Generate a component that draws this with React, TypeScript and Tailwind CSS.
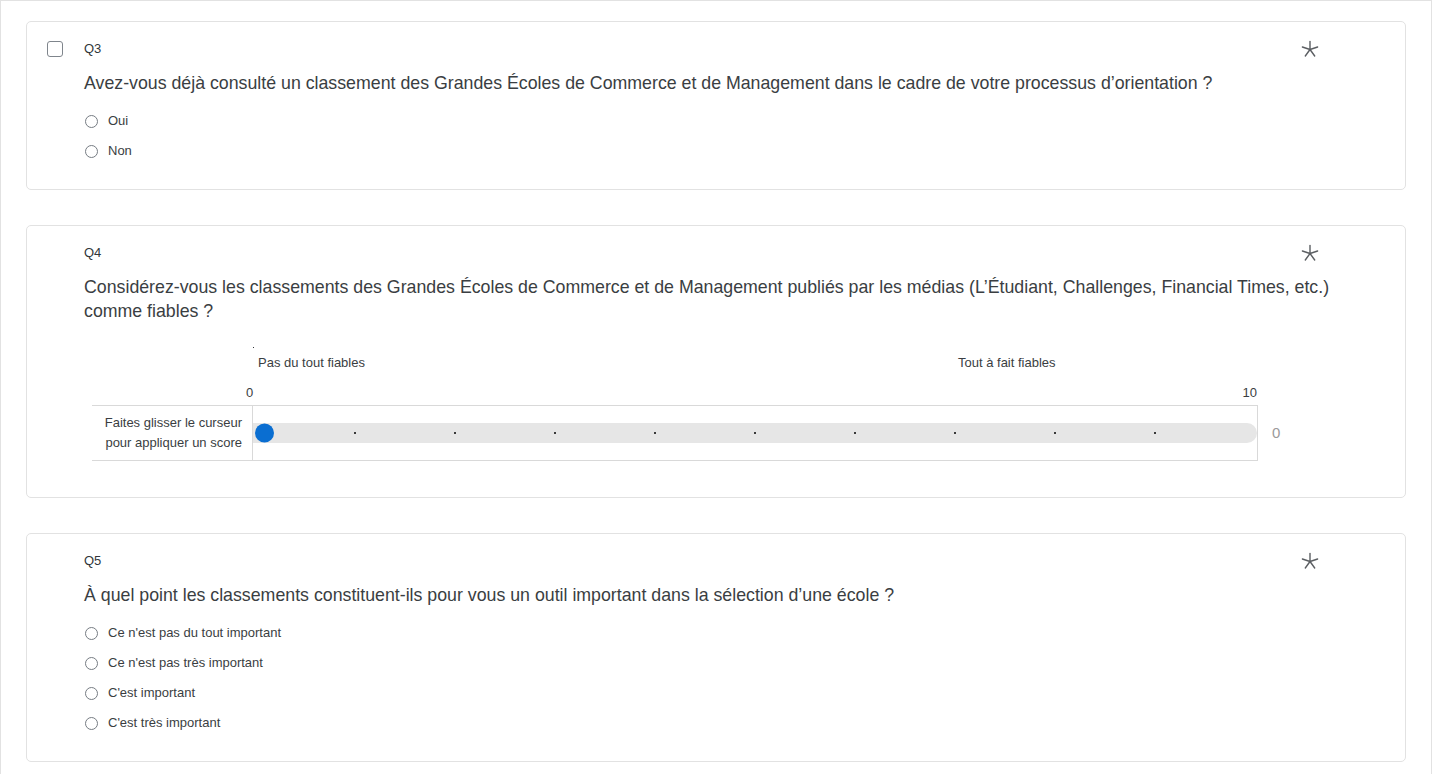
import React from 'react';

const font = { fontFamily: '"Liberation Sans", Arial, sans-serif' };

function Star() {
  const arms = [0, 72, 144, 216, 288];
  return (
    <svg width="18" height="18" viewBox="0 0 18 18" className="text-[#5b5e62]">
      {arms.map((a) => {
        const r = ((a - 90) * Math.PI) / 180;
        return (
          <line
            key={a}
            x1="9"
            y1="9.5"
            x2={9 + 8 * Math.cos(r)}
            y2={9.5 + 8 * Math.sin(r)}
            stroke="currentColor"
            strokeWidth="1.4"
            strokeLinecap="round"
          />
        );
      })}
    </svg>
  );
}

function Radio({ label }: { label: string }) {
  return (
    <div className="flex h-[30px] items-center">
      <span className="ml-[1px] h-[13px] w-[13px] rounded-full border border-[#767c83] bg-white" />
      <span className="ml-[10px] text-[13px] text-[#3a3e42]">{label}</span>
    </div>
  );
}

function Card({
  id,
  question,
  checkbox,
  children,
  bottom = 'pb-[23px]',
}: {
  id: string;
  question: string;
  checkbox?: boolean;
  children: React.ReactNode;
  bottom?: string;
}) {
  return (
    <div className={`flex rounded-[5px] border border-[#e2e2e2] bg-white ${bottom}`}>
      <div className="w-[57px] shrink-0 pl-[20px] pt-[19px]">
        {checkbox && <div className="h-[16px] w-[16px] rounded-[3px] border border-[#7f858c]" />}
      </div>
      <div className="flex-1 pr-[45px] pt-[17px]">
        <div className="flex h-[20px] items-center justify-between">
          <span className="text-[13px] text-[#32363a]">{id}</span>
          <span className="mr-[41px]">
            <Star />
          </span>
        </div>
        <p className="mt-[12px] text-[17.75px] leading-[24px] text-[#3a3e42]">{question}</p>
        {children}
      </div>
    </div>
  );
}

function Slider() {
  const cells = Array.from({ length: 10 }, (_, i) => i);
  return (
    <div className="ml-[8px] mt-[24px]">
      <div className="ml-[161px] h-[1px] w-[1px] bg-[#32363a]" />
      <div className="mt-[6px] flex h-[18px] items-center pl-[166px] text-[13px] text-[#3a3e42]">
        <span className="w-[700px]">Pas du tout fiables</span>
        <span>Tout à fait fiables</span>
      </div>
      <div className="mt-[12px] flex h-[18px] w-[1165px] items-center justify-between text-[13px] text-[#3a3e42]">
        <span className="ml-[154px]">0</span>
        <span>10</span>
      </div>
      <div className="mt-[3px] flex items-center">
        <div className="flex h-[56px] w-[1166px] border-y border-r border-[#d9d9d9]">
          <div className="flex w-[161px] items-center justify-end border-r border-[#d9d9d9] pr-[10px] text-right text-[13px] leading-[20px] text-[#3a3e42]">
            Faites glisser le curseur
            <br />
            pour appliquer un score
          </div>
          <div className="relative flex flex-1 items-center">
            <div className="flex h-[20px] w-full items-center rounded-r-full bg-[#e6e6e6] pl-[1px]">
              {cells.map((i) => (
                <div key={i} className="flex h-full w-[100px] items-center">
                  {i > 0 && <span className="h-[2px] w-[2px] bg-[#3a3a3a]" />}
                </div>
              ))}
            </div>
            <span className="absolute left-[2px] top-1/2 h-[19px] w-[19px] -translate-y-1/2 rounded-full bg-[#0a6ed1]" />
          </div>
        </div>
        <span className="ml-[14px] text-[15px] text-[#9a9a9a]">0</span>
      </div>
    </div>
  );
}

export default function App() {
  return (
    <div style={font} className="min-h-[774px] w-[1432px] border-x border-t border-[#e2e2e2] bg-white px-[25px] pb-[12px] pt-[20px]">
      <div className="flex flex-col gap-[35px]">
        <Card
          id="Q3"
          checkbox
          question="Avez-vous déjà consulté un classement des Grandes Écoles de Commerce et de Management dans le cadre de votre processus d’orientation ?"
        >
          <div className="mt-[11px]">
            <Radio label="Oui" />
            <Radio label="Non" />
          </div>
        </Card>
        <Card
          id="Q4"
          bottom="pb-[36px]"
          question="Considérez-vous les classements des Grandes Écoles de Commerce et de Management publiés par les médias (L’Étudiant, Challenges, Financial Times, etc.) comme fiables ?"
        >
          <Slider />
        </Card>
        <Card
          id="Q5"
          question="À quel point les classements constituent-ils pour vous un outil important dans la sélection d’une école ?"
        >
          <div className="mt-[11px]">
            <Radio label="Ce n'est pas du tout important" />
            <Radio label="Ce n'est pas très important" />
            <Radio label="C'est important" />
            <Radio label="C'est très important" />
          </div>
        </Card>
      </div>
    </div>
  );
}
